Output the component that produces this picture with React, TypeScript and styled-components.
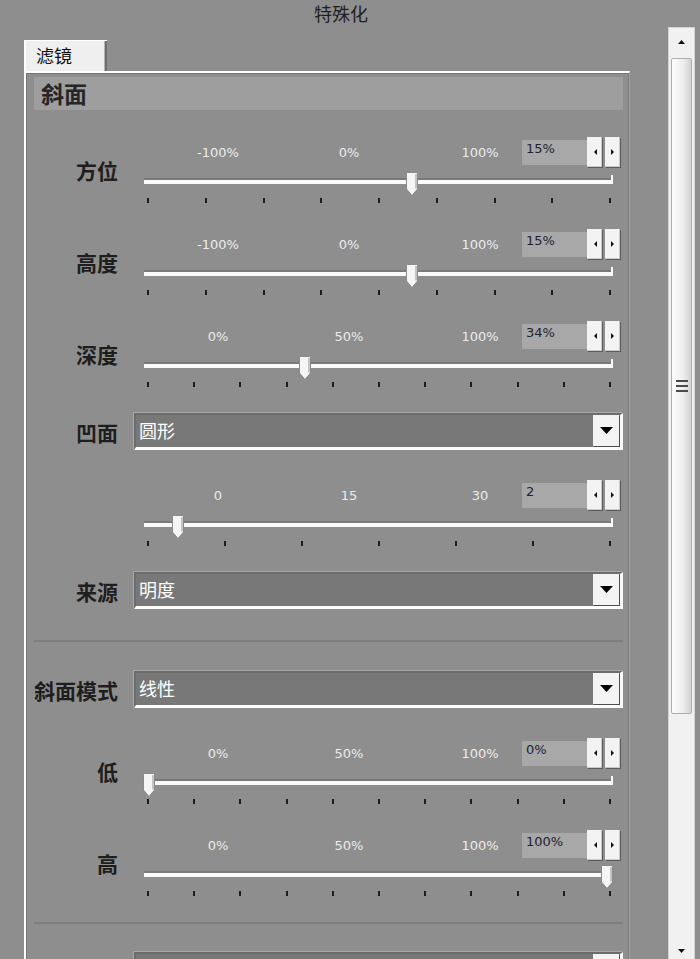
import styled, { createGlobalStyle } from 'styled-components';

const GlobalStyle = createGlobalStyle`
  html, body {
    margin: 0;
    padding: 0;
    background: #8e8e8e;
    overflow: hidden;
  }
  body {
    font-family: "Noto Sans CJK SC", "Noto Sans", sans-serif;
  }
`;

const Page = styled.div`
  width: 700px;
  height: 959px;
  display: flex;
  flex-direction: column;
  overflow: hidden;
  background: #8e8e8e;
`;

const Title = styled.div`
  height: 27px;
  line-height: 27px;
  text-align: center;
  padding-right: 18px;
  font-size: 18px;
  color: #1e1e1e;
`;

const Body = styled.div`
  flex: 1;
  display: flex;
  min-height: 0;
`;

const Main = styled.div`
  width: 606px;
  margin-left: 24px;
  padding-top: 13px;
`;

const Tab = styled.div`
  width: 83px;
  height: 31px;
  box-sizing: border-box;
  background: #efefef;
  border-top: 1px solid #fff;
  border-left: 2px solid #fff;
  box-shadow: inset -2px 0 0 #6e6e6e, inset -3px 0 0 #b4b4b4;
  font-size: 18px;
  line-height: 29px;
  padding-left: 10px;
  color: #111;
`;

const Panel = styled.div`
  box-sizing: border-box;
  height: 900px;
  border-top: 2px solid #fff;
  border-left: 2px solid #fff;
  border-right: 1px solid #a2a2a2;
  box-shadow: inset 1px 1px 0 #767676, inset -1px 0 0 #7c7c7c;
  padding: 4px 6px 0 8px;
`;

const Header = styled.div`
  height: 33px;
  line-height: 33px;
  background: #9e9e9e;
  padding-left: 7px;
  font-size: 23px;
  font-weight: 700;
  color: #262626;
  margin-bottom: 27px;
`;

const Row = styled.div<{ $gap: number }>`
  display: grid;
  grid-template-columns: 84px 1fr;
  column-gap: 16px;
  align-items: center;
  margin-bottom: ${(p) => p.$gap}px;
`;

const Label = styled.div`
  text-align: right;
  font-size: 21px;
  line-height: 24px;
  font-weight: 700;
  color: #1e1e1e;
  white-space: nowrap;
`;

const Slider = styled.div`
  padding: 0 10px;
`;

const TopLine = styled.div`
  display: flex;
  height: 30px;
  align-items: center;
`;

const Scale = styled.div`
  width: 322px;
  margin-left: 44px;
  display: flex;
  justify-content: space-between;
`;

const ScaleLabel = styled.span`
  width: 60px;
  text-align: center;
  font-family: "DejaVu Sans", sans-serif;
  font-size: 13px;
  color: #ececec;
`;

const Spinner = styled.div`
  display: flex;
  align-items: flex-start;
  align-self: flex-start;
  margin-left: 12px;
  margin-right: -8px;
  height: 30px;
`;

const SpinValue = styled.div`
  width: 65px;
  height: 25px;
  margin-top: 3px;
  box-sizing: border-box;
  background: #a8a8a8;
  padding: 1px 0 0 4px;
  font-family: "DejaVu Sans", sans-serif;
  font-size: 13px;
  color: #22222e;
`;

const SpinButton = styled.div<{ $last?: boolean }>`
  width: 15px;
  height: 30px;
  margin-left: ${(p) => (p.$last ? 3 : 0)}px;
  background: #f3f3f3;
  box-shadow: 1px 1px 0 #5c5c5c, inset -1px -1px 0 #c9c9c9;
  display: flex;
  align-items: center;
  justify-content: center;
`;

const TrackArea = styled.div`
  position: relative;
  height: 30px;
  box-sizing: border-box;
  padding-top: 11px;
`;

const TrackLine = styled.div`
  position: relative;
  height: 4px;
  background: #fafafa;
  border-top: 2px solid #7a7a7a;
  &::after {
    content: '';
    position: absolute;
    right: 0;
    top: -5px;
    width: 2px;
    height: 9px;
    background: #fafafa;
  }
`;

const Thumb = styled.svg`
  position: absolute;
  top: 5px;
`;

const Ticks = styled.div`
  display: flex;
  justify-content: space-between;
  margin: 1px 2px 0 3px;
`;

const Tick = styled.span`
  width: 2px;
  height: 5px;
  background: #1c1c1c;
`;

const Select = styled.div`
  height: 37px;
  box-sizing: border-box;
  display: flex;
  background: #787878;
  border-top: 2px solid #6c6c6c;
  border-left: 2px solid #6c6c6c;
  border-bottom: 3px solid #fbfbfb;
  border-right: 3px solid #fbfbfb;
  box-shadow: -1px -1px 0 #a8a8a8;
`;

const SelectText = styled.div`
  flex: 1;
  padding-left: 3px;
  font-size: 18px;
  line-height: 30px;
  color: #fff;
`;

const SelectButton = styled.div`
  width: 26px;
  margin: 0 1px 1px 0;
  background: #f4f4f4;
  box-shadow: 1px 1px 0 #4e4e4e;
  display: flex;
  align-items: center;
  justify-content: center;
`;

const Separator = styled.div<{ $gap: number }>`
  height: 2px;
  background: #7e7e7e;
  margin-bottom: ${(p) => p.$gap}px;
`;

const ScrollBar = styled.div`
  width: 27px;
  height: 939px;
  margin-left: 38px;
  box-sizing: border-box;
  background: #f1f1f1;
  border: 1px solid #d4d4d4;
  display: flex;
  flex-direction: column;
  align-items: center;
`;

const ScrollArrow = styled.div`
  height: 28px;
  width: 100%;
  display: flex;
  align-items: center;
  justify-content: center;
`;

const ScrollThumb = styled.div`
  width: 21px;
  height: 656px;
  margin-top: 2px;
  box-sizing: border-box;
  border: 1px solid #adadad;
  border-radius: 2px;
  background: linear-gradient(to right, #fdfdfd, #ededed 60%, #d2d2d2);
  display: flex;
  flex-direction: column;
  align-items: center;
  justify-content: center;
  gap: 3px;
`;

const Grip = styled.span`
  width: 12px;
  height: 2px;
  background: #4a4a4a;
`;

const Spacer = styled.div`
  flex: 1;
`;

type SliderSpec = {
  kind: 'slider';
  label: string;
  scale: [string, string, string];
  ticks: number;
  value: string;
  frac: number;
  gap: number;
};

type SelectSpec = { kind: 'select'; label: string; text: string; gap: number };
type SepSpec = { kind: 'sep'; gap: number };
type Item = SliderSpec | SelectSpec | SepSpec;

const items: Item[] = [
  { kind: 'slider', label: '方位', scale: ['-100%', '0%', '100%'], ticks: 9, value: '15%', frac: 0.575, gap: 26 },
  { kind: 'slider', label: '高度', scale: ['-100%', '0%', '100%'], ticks: 9, value: '15%', frac: 0.575, gap: 26 },
  { kind: 'slider', label: '深度', scale: ['0%', '50%', '100%'], ticks: 11, value: '34%', frac: 0.34, gap: 26 },
  { kind: 'select', label: '凹面', text: '圆形', gap: 30 },
  { kind: 'slider', label: '', scale: ['0', '15', '30'], ticks: 7, value: '2', frac: 0.063, gap: 26 },
  { kind: 'select', label: '来源', text: '明度', gap: 31 },
  { kind: 'sep', gap: 29 },
  { kind: 'select', label: '斜面模式', text: '线性', gap: 30 },
  { kind: 'slider', label: '低', scale: ['0%', '50%', '100%'], ticks: 11, value: '0%', frac: 0, gap: 26 },
  { kind: 'slider', label: '高', scale: ['0%', '50%', '100%'], ticks: 11, value: '100%', frac: 1, gap: 26 },
  { kind: 'sep', gap: 28 },
  { kind: 'select', label: '', text: '', gap: 0 },
];

const Arrow = ({ dir }: { dir: 'left' | 'right' | 'up' | 'down' }) => {
  const pts = {
    left: '4,0 4,6 1,3',
    right: '0,0 0,6 3,3',
    up: '0,4 7,4 3.5,0',
    down: '0,0 7,0 3.5,4',
  }[dir];
  const w = dir === 'left' || dir === 'right' ? 4 : 7;
  const h = dir === 'left' || dir === 'right' ? 6 : 4;
  return (
    <svg width={w} height={h} viewBox={`0 0 ${w} ${h}`}>
      <polygon points={pts} fill="#111" />
    </svg>
  );
};

const SliderControl = ({ spec }: { spec: SliderSpec }) => (
  <Slider>
    <TopLine>
      <Scale>
        {spec.scale.map((s) => (
          <ScaleLabel key={s}>{s}</ScaleLabel>
        ))}
      </Scale>
      <Spinner>
        <SpinValue>{spec.value}</SpinValue>
        <SpinButton>
          <Arrow dir="left" />
        </SpinButton>
        <SpinButton $last>
          <Arrow dir="right" />
        </SpinButton>
      </Spinner>
    </TopLine>
    <TrackArea>
      <TrackLine />
      <Thumb width="12" height="24" viewBox="0 0 12 24" style={{ left: 5 + spec.frac * 458 - 6 }}>
        <polygon points="0.5,0.5 11.5,0.5 11.5,17 6,23.5 0.5,17" fill="#f5f5f5" stroke="#8a8a8a" />
        <line x1="10" y1="2" x2="10" y2="16.5" stroke="#c4c4c4" strokeWidth="2" />
      </Thumb>
    </TrackArea>
    <Ticks>
      {Array.from({ length: spec.ticks }).map((_, i) => (
        <Tick key={i} />
      ))}
    </Ticks>
  </Slider>
);

const App = () => (
  <>
    <GlobalStyle />
    <Page>
      <Title>特殊化</Title>
      <Body>
        <Main>
          <Tab>滤镜</Tab>
          <Panel>
            <Header>斜面</Header>
            {items.map((it, i) => {
              if (it.kind === 'sep') return <Separator key={i} $gap={it.gap} />;
              return (
                <Row key={i} $gap={it.gap}>
                  <Label>{it.label}</Label>
                  {it.kind === 'slider' ? (
                    <SliderControl spec={it} />
                  ) : (
                    <Select>
                      <SelectText>{it.text}</SelectText>
                      <SelectButton>
                        <svg width="13" height="7" viewBox="0 0 13 7">
                          <polygon points="0,0 13,0 6.5,7" fill="#000" />
                        </svg>
                      </SelectButton>
                    </Select>
                  )}
                </Row>
              );
            })}
          </Panel>
        </Main>
        <ScrollBar>
          <ScrollArrow>
            <Arrow dir="up" />
          </ScrollArrow>
          <ScrollThumb>
            <Grip />
            <Grip />
            <Grip />
          </ScrollThumb>
          <Spacer />
          <ScrollArrow>
            <Arrow dir="down" />
          </ScrollArrow>
        </ScrollBar>
      </Body>
    </Page>
  </>
);

export default App;
